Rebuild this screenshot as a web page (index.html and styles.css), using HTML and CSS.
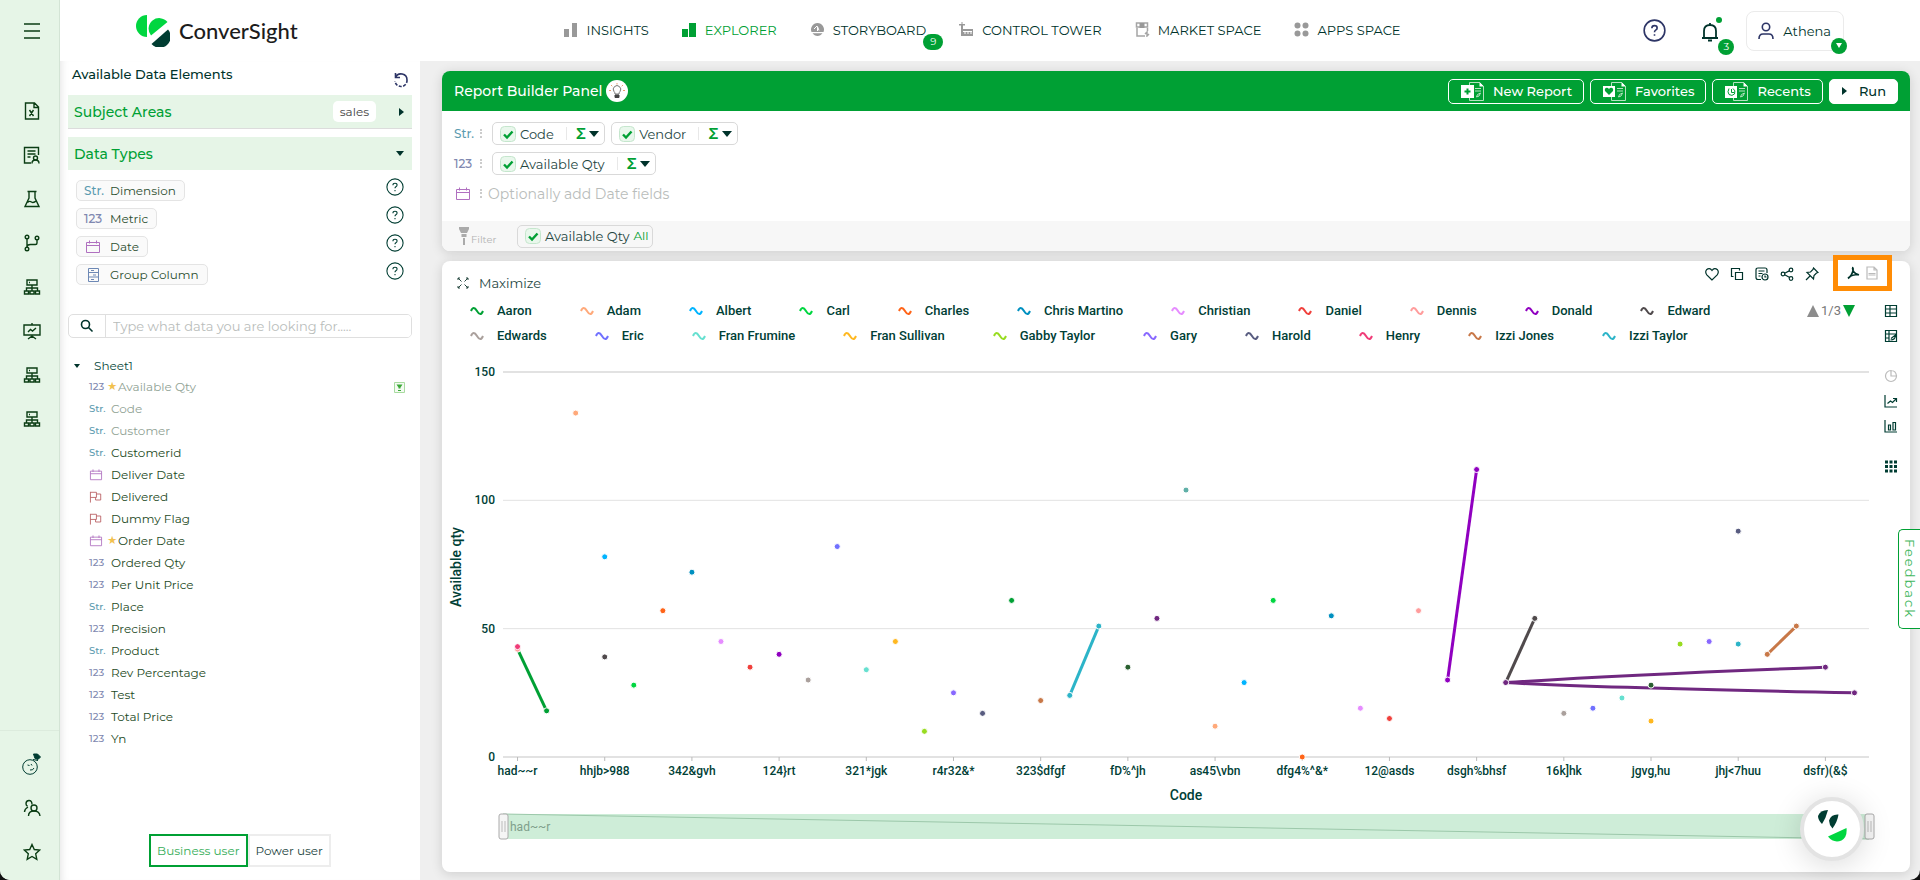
FILE: index.html
```html
<!DOCTYPE html>
<html lang="en">
<head>
    <meta charset="UTF-8">
    <title>ConverSight - Explorer</title>
    <link rel="stylesheet" href="styles.css">
</head>
<body>
    <!-- shared icons -->
    <svg class="sprite" aria-hidden="true">
        <symbol id="i-cal" viewBox="0 0 16 14"><path d="M1.500 2.500h13v10h-13zM1.500 5.500h13M4.500.5v3M11.500.5v3"/></symbol>
        <symbol id="i-flag" viewBox="0 0 16 14"><path d="M1.500 1v12.500M1.500 1.500h7v6h-7M8.500 3.500h5v7h-6v-3"/></symbol>
        <symbol id="i-help" viewBox="0 0 20 20"><circle cx="10" cy="10" r="9"/><path d="M7.700 8q0-2.200 2.300-2.200t2.300 2q0 1.200-1.300 1.900-1 .6-1 1.800M10 13.200v1.400"/></symbol>
        <symbol id="i-tree" viewBox="0 0 18 18"><path d="M4 2h10v5H4zM6 4.500h1M9 7v6M3.500 13v-3h11v3M1.500 13h4v3h-4zM7 13h4v3H7zM12.500 13h4v3h-4z"/></symbol>
        <symbol id="i-wave" viewBox="0 0 14 10"><path d="M1 5q2.500-6 6 0t6 0"/></symbol>
        <symbol id="i-check" viewBox="0 0 16 16"><rect x=".5" y=".5" width="15" height="15" rx="4" fill="#e9f7ec" stroke="#c5e6cd"/><path d="M4 8.500l3 3 5.500-6" fill="none" stroke="#00a034" stroke-width="2.400"/></symbol>
    </svg>

    <div class="app">
        <nav class="rail" aria-label="Tools">
            <button class="menu" title="Menu"><svg viewBox="0 0 18 18"><path d="M1 2h16M1 9h16M1 16h16"/></svg></button>
            <button title="Excel"><svg viewBox="0 0 18 18"><path d="M2.500 1h9l4 4v12h-13zM11 1v4.500h4.500M6.500 8l4 6M10.500 8l-4 6"/></svg></button>
            <button title="Report"><svg viewBox="0 0 18 18"><path d="M8 17H1.500V1.500h14V9M4.500 5h8M4.500 8h8M4.500 11h3"/><circle cx="12.500" cy="12" r="2"/><path d="M9 17.500q0-3.500 3.500-3.500t3.500 3.500"/></svg></button>
            <button title="Lab"><svg viewBox="0 0 18 18"><path d="M4.500 1.500h9M6 2v6l-4 8.500h14L12 8V2M4.500 12.500q2-2 4-.5t5-1.500"/></svg></button>
            <button title="Branches"><svg viewBox="0 0 18 18"><circle cx="4" cy="3" r="1.800"/><circle cx="4" cy="15" r="1.800"/><circle cx="14" cy="4" r="1.800"/><path d="M4 5v8M14 6v3q0 1.500-1.500 1.500h-5Q4 10.500 4 13"/></svg></button>
            <button title="Hierarchy"><svg><use href="#i-tree"/></svg></button>
            <button title="Presentation"><svg viewBox="0 0 18 18"><path d="M1 3h16v10H1zM9 1v2M9 13v3M5 17l4-3 4 3M5 10l2.500-2.500L9.500 9 13 6"/></svg></button>
            <button title="Network"><svg><use href="#i-tree"/></svg></button>
            <button title="Sources"><svg><use href="#i-tree"/></svg></button>
            <div class="rail-foot">
                <button title="Athena"><svg viewBox="0 0 20 22" class="face"><circle cx="8" cy="14" r="7.300"/><path d="M5.500 12l2 .5M9 11l1 1.500M8 17q3 .5 4-2"/><path d="M11.500 1h4l3 3-2.500 2.500-3-1z" fill="#003d32"/><path d="M11 6.500l5 1"/></svg></button>
                <button title="Users"><svg viewBox="0 0 18 18"><circle cx="11" cy="9" r="3"/><path d="M5.500 17q0-5 5.500-5t6 5M9 5.500Q9 1.500 6 1.500T3 4.700q0 1.500 1.500 2.600M1.500 13q0-3 3.500-5"/></svg></button>
                <button title="Starred"><svg viewBox="0 0 18 18"><path d="M9 1.500l2.300 5 5.400.6-4 3.700 1.100 5.500L9 13.500l-4.800 2.800 1.100-5.500-4-3.700 5.400-.6z"/></svg></button>
            </div>
        </nav>

        <div class="page">
            <header class="top">
                <a class="logo" href="#">
                    <svg viewBox="0 0 34 32"><path d="M11 0v22A11 11 0 0 1 11 0z" fill="#00d640"/><path d="M15 20.500A10.500 10.500 0 0 1 31.500 7z" fill="#00d640"/><path d="M15.500 29A10.500 10.500 0 0 0 32 14.500z" fill="#003d32"/></svg>
                    <span>ConverSight</span>
                </a>
                <nav class="tabs" aria-label="Main">
                    <a href="#"><svg viewBox="0 0 15 15"><path d="M1 7h5v8H1zM9 1h5v14H9z"/></svg>INSIGHTS</a>
                    <a href="#" class="on"><svg viewBox="0 0 15 15"><path d="M0 7h6v8H0zM7 1h7v14H7z"/></svg>EXPLORER</a>
                    <a href="#"><svg viewBox="0 0 15 15"><path d="M7.500 1a6.500 6.500 0 0 0-6 9h12a6.500 6.500 0 0 0-6-9zM2.500 11.200h10a6 6 0 0 1-10 0z"/><path d="M4 7l3-3M7.500 9V4.500L9 8.500" stroke="#fff" fill="none"/></svg>STORYBOARD<b class="badge">9</b></a>
                    <a href="#"><svg viewBox="0 0 15 15"><path d="M0 2h6v1.500H4V7h10v7H2V3.500H0zM2.500 0h1v2h-1z"/><path d="M4 9.500h9M6 9.500V12M9 9.500V12M12 9.500V12" stroke="#fff" fill="none"/></svg>CONTROL TOWER</a>
                    <a href="#"><svg viewBox="0 0 15 15"><path d="M1.500 1h11v4h-11z" stroke="#a5a5a5" stroke-width="1.500" fill="none"/><path d="M4.500 1h5v5h-5z"/><path d="M2 6v8h8M12.500 6v3M10 12l2-2v4l2-2" stroke="#a5a5a5" stroke-width="1.500" fill="none"/></svg>MARKET SPACE</a>
                    <a href="#"><svg viewBox="0 0 15 15"><circle cx="3.500" cy="3.500" r="3"/><circle cx="11.500" cy="3.500" r="3"/><circle cx="3.500" cy="11.500" r="3"/><circle cx="11.500" cy="11.500" r="3"/></svg>APPS SPACE</a>
                </nav>
                <div class="account">
                    <button class="help" title="Help"><svg><use href="#i-help"/></svg></button>
                    <button class="bell" title="Notifications"><svg viewBox="0 0 20 20"><path d="M2 16h16M4 16V9q0-6 6-6t6 6v7M10 1v2M8 18.500h4"/></svg><i class="dot"></i><b class="badge">3</b></button>
                    <button class="user"><svg viewBox="0 0 16 18"><circle cx="8" cy="5" r="3.700"/><path d="M1 17q0-5 4-5h6q4 0 4 5"/></svg>Athena<b class="badge"><i class="tri down"></i></b></button>
                </div>
            </header>

            <div class="content">
                <aside class="side">
                    <div class="side-head"><h2>Available Data Elements</h2>
                        <button title="Reset"><svg viewBox="0 0 16 16"><path d="M2.500 1v4.500H7M2.500 5.500A6 6 0 0 1 14 8"/><path d="M14 8A6 6 0 0 1 2 9" stroke-dasharray="3 1.500"/></svg></button></div>
                    <button class="band areas">Subject Areas<span class="tag">sales</span><i class="tri right"></i></button>
                    <button class="band">Data Types<i class="tri down"></i></button>
                    <ul class="types">
                        <li><button class="type"><span class="str">Str.</span>Dimension</button><button class="help" title="About dimensions"><svg><use href="#i-help"/></svg></button></li>
                        <li><button class="type"><span class="num">123</span>Metric</button><button class="help" title="About metrics"><svg><use href="#i-help"/></svg></button></li>
                        <li><button class="type"><svg class="cal"><use href="#i-cal"/></svg>Date</button><button class="help" title="About dates"><svg><use href="#i-help"/></svg></button></li>
                        <li><button class="type"><svg class="group" viewBox="0 0 16 14"><path d="M3.500.5h10v13h-10zM3.500 4.500h10M3.500 9h10M6 2.500h3M8 7h3M6 11.500h3"/></svg>Group Column</button><button class="help" title="About groups"><svg><use href="#i-help"/></svg></button></li>
                    </ul>
                    <label class="search">
                        <svg viewBox="0 0 14 14"><circle cx="5.500" cy="5.500" r="4"/><path d="M8.500 8.500l4 4"/></svg>
                        <input type="text" placeholder="Type what data you are looking for....." aria-label="Search data">
                    </label>
                    <button class="sheet"><i class="tri down"></i>Sheet1</button>
                    <ul class="fields">
                        <li class="used"><span class="num">123</span><i class="star">★</i>Available Qty<svg class="filtered" viewBox="0 0 11 11"><path d="M.5.5h10v10H.5z" fill="#f4fbf2" stroke="#a8dba0"/><path d="M2.500 2.500h6l-2 3v1h-2v-1zM4 8h3v1H4z" fill="#3aa836"/></svg></li>
                        <li class="used"><span class="str">Str.</span>Code</li>
                        <li class="used"><span class="str">Str.</span>Customer</li>
                        <li><span class="str">Str.</span>Customerid</li>
                        <li><svg class="cal"><use href="#i-cal"/></svg>Deliver Date</li>
                        <li><svg class="flag"><use href="#i-flag"/></svg>Delivered</li>
                        <li><svg class="flag"><use href="#i-flag"/></svg>Dummy Flag</li>
                        <li><svg class="cal"><use href="#i-cal"/></svg><i class="star">★</i>Order Date</li>
                        <li><span class="num">123</span>Ordered Qty</li>
                        <li><span class="num">123</span>Per Unit Price</li>
                        <li><span class="str">Str.</span>Place</li>
                        <li><span class="num">123</span>Precision</li>
                        <li><span class="str">Str.</span>Product</li>
                        <li><span class="num">123</span>Rev Percentage</li>
                        <li><span class="num">123</span>Test</li>
                        <li><span class="num">123</span>Total Price</li>
                        <li><span class="num">123</span>Yn</li>
                    </ul>
                    <div class="mode"><button class="on">Business user</button><button>Power user</button></div>
                </aside>

                <main class="work">
                    <section class="card builder">
                        <div class="bar">
                            <h1>Report Builder Panel</h1>
                            <button class="bulb" title="Tips"><svg viewBox="0 0 16 16"><path d="M8 0v1.500M2 2l1.300 1.300M14 2l-1.300 1.300M0 7.500h2M16 7.500h-2" stroke="#e8a070"/><path d="M6 11q0-1.500-1-2.500a3.700 3.700 0 1 1 6 0q-1 1-1 2.500z" stroke="#777"/><path d="M6 12h4v2.500H6z" fill="#444" stroke="#444"/></svg></button>
                            <div class="actions">
                                <button><svg viewBox="0 0 24 19"><path class="doc" d="M8.500 4V.5h10l4 4v14h-14V15M14 6.500h6M14 9h6M15.500 15q0-3 4-4-1 4-4 4"/><path d="M0 3h13v13H0zM18.500 0v4.500H23z" fill="#fff"/><path class="mark" d="M6.500 6.500v6M3.500 9.500h6"/></svg>New Report</button>
                                <button><svg viewBox="0 0 24 19"><path class="doc" d="M8.500 4V.5h10l4 4v14h-14V15M14 6.500h6M14 9h6M15.500 15q0-3 4-4-1 4-4 4"/><path d="M0 4h12v11H0zM18.500 0v4.500H23z" fill="#fff"/><path d="M6 13L2 9q-.8-3 1.800-3.200Q5.400 5.800 6 7.200 6.600 5.800 8.200 5.800 10.800 6 10 9z" fill="#00a034"/></svg>Favorites</button>
                                <button><svg viewBox="0 0 24 19"><path class="doc" d="M8.500 4V.5h10l4 4v14h-14V15M14 6.500h6M14 9h6M15.500 15q0-3 4-4-1 4-4 4"/><path d="M0 4h12v12H0zM18.500 0v4.500H23z" fill="#fff"/><path class="mark thin" d="M6.500 7v3.500H9M4 6.500Q2 10 4 12.500q3 2 5.500-.5Q11 8.500 8 6.500"/></svg>Recents</button>
                                <button class="run"><i class="tri right"></i>Run</button>
                            </div>
                        </div>
                        <div class="slots">
                            <div class="slot"><span class="str">Str.</span><i class="grip"></i>
                                <span class="pill"><svg><use href="#i-check"/></svg>Code<button title="Aggregate Code">Σ<i class="tri down"></i></button></span>
                                <span class="pill"><svg><use href="#i-check"/></svg>Vendor<button title="Aggregate Vendor">Σ<i class="tri down"></i></button></span>
                            </div>
                            <div class="slot"><span class="num">123</span><i class="grip"></i>
                                <span class="pill"><svg><use href="#i-check"/></svg>Available Qty<button title="Aggregate Available Qty">Σ<i class="tri down"></i></button></span>
                            </div>
                            <div class="slot"><svg class="cal"><use href="#i-cal"/></svg><i class="grip"></i>
                                <input type="text" placeholder="Optionally add Date fields" aria-label="Date fields">
                            </div>
                        </div>
                        <div class="filters">
                            <span class="filter-name"><svg viewBox="0 0 10 18"><path d="M0 0h10v2L8 6H2L0 2zM2.500 7h5v3h-5zM4 11h2v7H4z"/></svg>Filter</span>
                            <span class="pill"><svg><use href="#i-check"/></svg>Available Qty<em>All</em></span>
                        </div>
                    </section>

                    <section class="card result">
                        <div class="result-head">
                            <button class="max"><svg viewBox="0 0 12 12"><path d="M1 3V1h2M9 1h2v2M1 9v2h2M11 9v2H9M1 1l3.500 3.500M11 1L7.500 4.500M1 11l3.500-3.500M11 11L7.500 7.500"/></svg>Maximize</button>
                            <div class="tools">
                                <button title="Like"><svg viewBox="0 0 14 14"><path d="M7 13L1.800 7.800Q-.2 5 1.500 2.800 4.500.2 7 3.500 9.500.2 12.500 2.800 14.200 5 12.200 7.800z"/></svg></button>
                                <button title="Copy"><svg viewBox="0 0 14 14"><path d="M5.500 5.500h7v7h-7zM3.500 9.500h-2v-8h8v2"/></svg></button>
                                <button title="Schedule"><svg viewBox="0 0 14 14"><path d="M6 12.500H3q-2 0-2-2V3q0-2 2-2h7q2 0 2 2v3M3.500 4h6M3.500 6.500h4M3.500 9h2"/><circle cx="10" cy="10" r="3"/><path d="M10 8.500V10h1.500"/></svg></button>
                                <button title="Share"><svg viewBox="0 0 14 14"><circle cx="3" cy="7" r="1.800"/><circle cx="11" cy="3" r="1.800"/><circle cx="11" cy="11.500" r="1.800"/><path d="M4.700 6.200l4.500-2.300M4.700 7.800l4.500 2.500"/></svg></button>
                                <button title="Pin"><svg viewBox="0 0 14 14"><path d="M8.500 1l4.500 4.500-1.500.5L9 8.500 8.500 12 2 5.500 5.500 5 8 2.500zM5 9l-4 4"/></svg></button>
                            </div>
                            <div class="export">
                                <button title="Export PDF"><svg viewBox="0 0 14 14"><path d="M6 1.500q1.600 0 1 3-1 5-5 8M6.500 2q0 5 6.500 7M2 12q4-3.500 10.500-3.500" stroke-width="1.600"/></svg></button>
                                <button title="Export file" disabled><svg viewBox="0 0 14 14"><path d="M2 1h7l3 3v9H2zM9 1v3h3M3.500 7.500h7M3.500 9h7"/></svg></button>
                            </div>
                        </div>
                        <div class="result-body">
                            <div class="plot">
                                <div class="legend">
                                    <div class="legend-items">
                                        <div class="legend-row" id="legend1"></div>
                                        <div class="legend-row" id="legend2"></div>
                                    </div>
                                    <div class="pager"><button title="Previous" disabled></button><span>1/3</span><button title="Next"></button></div>
                                </div>
                                <svg class="chart" id="chart" viewBox="0 0 1434 500" role="img" aria-label="Available qty by Code"></svg>
                            </div>
                            <div class="views">
                                <button title="Table"><svg viewBox="0 0 14 14"><path d="M1.500 1.500h11v11h-11zM1.500 5h11M1.500 9h11M6 1.500v11"/></svg></button>
                                <button title="Pivot"><svg viewBox="0 0 14 14"><path d="M1.500 1.500h11v11h-11zM1.500 5h11M5 1.500v11M1.500 9h3.500M6.500 11q5 0 5-5L7 9.500"/></svg></button>
                                <button title="Pie" class="gap" disabled><svg viewBox="0 0 14 14"><path d="M7 1.500A5.500 5.500 0 1 0 12.500 7H7zM7 1.500Q12 1.500 12.500 7"/></svg></button>
                                <button title="Line"><svg viewBox="0 0 14 14"><path d="M1 1v12h12M3.500 9.500L6.500 7l2 1.500L12 5M9 4.500h3.500V8"/></svg></button>
                                <button title="Bar"><svg viewBox="0 0 14 14"><path d="M1 1v12h12M4.500 6h2v5h-2zM9 3.500h2.500V11H9z"/></svg></button>
                                <button title="More" class="gap"><svg viewBox="0 0 14 14"><path d="M1 3h12M1 7.500h12M1 12h12" stroke-width="3" stroke-dasharray="3 1.500"/></svg></button>
                            </div>
                        </div>
                    </section>
                </main>
            </div>
        </div>
    </div>

    <button class="feedback">Feedback</button>
    <button class="bot" title="Ask Athena"><svg viewBox="0 0 30 32"><path d="M11 0Q3 0 1 6q0 4 4 8 4-6 6-14z" fill="#003d32"/><path d="M21.500 4.500Q14 4 12 10.500q0 4 3.500 8 5-7 6-14z" fill="#003d32"/><path d="M11 26.500L29.500 18q1 9-5 12.500-8 3-13.500-4z" fill="#00d640"/></svg></button>

    <script src="chart.js"></script>
</body>
</html>
```
FILE: styles.css
```css
:root {
    --green: #00a034;
    --mint: #e6f5e7;
    --ink: #00332b;
    --text: #24463f;
    --line: #d9d9d9;
}
* { box-sizing: border-box; }
html { background: #111; }
body {
    margin: 0;
    color: var(--text);
    font: 13px/16px Montserrat, Inter, sans-serif;
}
button, input { font: inherit; color: inherit; }
button { background: none; border: none; padding: 0; cursor: pointer; }
a { color: inherit; text-decoration: none; }
ul { list-style: none; margin: 0; padding: 0; }
h1, h2 { margin: 0; font-weight: 500; }
i, em { font-style: normal; }
svg { display: block; flex: none; fill: none; stroke: currentColor; }
.sprite { position: absolute; width: 0; height: 0; }

.tri { border: 4px solid transparent; flex: none; }
.tri.right { border-left: 5px solid var(--ink); border-right: none; }
.tri.down { border-top: 5px solid var(--ink); border-bottom: none; }
.str, .num { flex: none; font-size: 12px; font-weight: 500; width: 18px; }
.str { color: #5c9bb0; }
.num { color: #8088b0; }
.cal { color: #b070c0; width: 16px; height: 14px; }
.flag { color: #b85c60; width: 16px; height: 14px; }
.badge {
    position: absolute;
    min-width: 16px; height: 16px;
    border-radius: 8px;
    background: var(--green); color: #fff;
    font-size: 10px; font-weight: 400; text-align: center; }

.app {
    display: flex;
    min-height: 100vh;
    background: #efefef;
    border-radius: 0 0 10px 10px;
    overflow: hidden; }

/* left rail */
.rail {
    flex: none;
    width: 60px;
    background: var(--mint);
    border-right: 1px solid #d3e4d5;
    color: #0b3d14;
    padding-top: 9px;
    display: flex;
    flex-direction: column; }
.rail button {
    width: 100%; height: 44px;
    padding-left: 4px;
    display: grid; place-items: center; }
.rail svg { width: 18px; height: 18px; stroke-width: 1.4; }
.rail .menu { margin-bottom: 36px; }
.rail-foot { margin-top: auto; padding: 11px 0 6px; border-top: 1px solid #dcebdd; }
.rail .face { width: 20px; height: 22px; stroke-width: 1; color: #003d32; }

/* header */
.page { flex: 1; min-width: 0; display: flex; flex-direction: column; }
.top {
    height: 61px;
    padding: 0 76px;
    background: #fff;
    display: flex;
    align-items: center; }
.logo, .account { flex: 1; display: flex; align-items: center; }
.logo { gap: 9px; color: #1c1c1c; font: 500 22px/30px Lato, sans-serif; }
.logo svg { width: 34px; height: 32px; stroke: none; }
.tabs { display: flex; gap: 33px; margin: 0 16px 2px 0; color: var(--ink); }
.tabs a { position: relative; display: flex; align-items: center; gap: 8px; white-space: nowrap; }
.tabs svg { width: 15px; height: 15px; fill: #999; stroke: none; }
.tabs .on { color: var(--green); }
.tabs .on svg { fill: var(--green); }
.tabs .badge { right: -17px; top: 12px; width: 20px; }
.account { justify-content: flex-end; color: var(--ink); }
.account button { position: relative; }
.account .help svg { width: 23px; height: 23px; color: #2d3566; stroke-width: 1.4; }
.bell { margin: 2px 26px 0 34px; }
.bell svg { width: 20px; height: 20px; stroke-width: 1.8; }
.bell .badge { left: 18px; top: 17px; }
.dot { position: absolute; right: -2px; top: -5px; width: 6px; height: 6px; border-radius: 50%; background: var(--green); }
.user {
    height: 40px;
    border: 1px solid #ebebeb;
    border-radius: 8px;
    padding: 0 12px 0 11px;
    display: flex; align-items: center; gap: 9px; }
.user svg { width: 16px; height: 18px; color: #2d3566; stroke-width: 1.6; }
.user .badge { right: -4px; bottom: -4px; display: grid; place-items: center; }
.user .tri.down { border-width: 3px; border-top: 5px solid #fff; border-bottom: none; }

/* data elements */
.content { flex: 1; display: flex; }
.side {
    flex: none;
    width: 360px;
    background: #fff;
    box-shadow: inset 8px 0 10px -8px #ddd;
    padding: 4px 8px 13px;
    display: flex;
    flex-direction: column; }
.side-head {
    height: 30px;
    padding: 0 3px 0 4px;
    display: flex; justify-content: space-between;
    color: var(--ink); }
.side-head h2 { font-size: 13px; line-height: 18px; }
.side-head svg { width: 16px; height: 16px; color: #2d3566; stroke-width: 1.6; }
.band {
    height: 33px;
    padding: 0 8px 0 6px;
    background: var(--mint);
    display: flex; align-items: center;
    color: var(--green); font-size: 14px; font-weight: 500; }
.band .tri { margin-left: auto; }
.areas { margin-bottom: 9px; box-shadow: 0 1px #dcdcdc; }
.areas .tri { margin-left: 23px; }
.tag {
    margin-left: auto;
    background: #fff; border-radius: 5px;
    padding: 2px 7px; line-height: 17px;
    color: #444; font-size: 12px; font-weight: 400; }
.types { padding: 8px 8px 0; }
.types li { height: 28px; display: flex; justify-content: space-between; align-items: flex-start; }
.type {
    height: 21px;
    margin-top: 2px; padding: 0 8px 0 7px;
    border: 1px solid #e4e4e4; border-radius: 5px;
    background: #fafafa; color: #2c4f30;
    display: flex; align-items: center; gap: 8px;
    font-size: 12px; }
.types .cal, .types .group { width: 18px; }
.group { color: #6d88b5; height: 14px; }
.types .help { color: #003d32; }
.types .help svg { width: 18px; height: 18px; stroke-width: 1.2; }
.search {
    margin: 24px 0 18px;
    height: 24px;
    border: 1px solid #dfdfdf; border-radius: 5px;
    overflow: hidden;
    display: flex; align-items: center; }
.search svg { width: 14px; height: 14px; margin: 0 11px; stroke-width: 1.6; color: var(--ink); }
.search input { flex: 1; border: none; border-left: 1px solid #dfdfdf; padding: 0 7px; outline: none; height: 22px; }
input::placeholder { color: #b9bdbb; opacity: 1; }
.sheet { display: flex; align-items: center; gap: 14px; padding-left: 6px; height: 20px; font-size: 12px; color: #0a4a3d; }
.sheet .tri { border-width: 3px; border-top-width: 4px; }
.fields { font-size: 12px; color: #1d4a24; }
.fields li { height: 22px; padding: 0 7px 0 21px; display: flex; align-items: center; }
.fields .str, .fields .num { font-size: 10px; width: 22px; }
.fields .cal, .fields .flag { width: 14px; height: 12px; margin-right: 8px; }
.fields .star { color: #f2c14e; font-size: 10px; width: 11px; margin-left: -4px; }
.fields .used { color: #90a294; }
.filtered { width: 11px; height: 11px; margin-left: auto; stroke: none; }
.mode { margin: auto 0 0; display: flex; justify-content: center; font-size: 12px; }
.mode button { height: 33px; padding: 0 6px; border: 2px solid #ededed; }
.mode .on { border-color: var(--green); color: #35ad58; }

/* workspace */
.work {
    flex: 1; min-width: 0;
    padding: 10px 10px 8px 22px;
    display: flex; flex-direction: column; gap: 10px; }
.card { background: #fff; border-radius: 8px; box-shadow: 0 2px 12px rgba(0,0,0,.14); }
.bar {
    height: 40px;
    padding: 0 12px;
    border-radius: 8px 8px 0 0;
    background: var(--green); color: #fff;
    display: flex; align-items: center; }
.bar h1 { font-size: 14px; }
.bulb { width: 22px; height: 22px; margin-left: 4px; border-radius: 50%; background: #fff; display: grid; place-items: center; }
.bulb svg { width: 16px; height: 16px; }
.actions { margin-left: auto; display: flex; gap: 6px; }
.actions button {
    height: 25px;
    padding: 0 11px 0 12px;
    border: 1px solid #fff; border-radius: 5px;
    display: flex; align-items: center; gap: 8px;
    font-weight: 500; }
.actions svg { width: 24px; height: 19px; stroke: none; }
.actions .doc { stroke: #b5e2c1; }
.actions .mark { stroke: var(--green); stroke-width: 2; }
.actions .thin { stroke-width: 1; }
.actions .run { background: #fff; color: var(--ink); gap: 12px; }
.slots { padding: 8px 12px 13px; display: grid; gap: 1px; }
.slot { height: 29px; display: flex; align-items: center; }
.slot > .cal { width: 18px; }
.grip { width: 2px; height: 9px; margin: 0 10px 0 8px; border-left: 2px dotted #ccc; }
.slot input { flex: 1; border: none; outline: none; padding: 0; margin-left: -4px; font-size: 14px; }
.pill {
    height: 23px;
    margin-right: 6px; padding: 0 5px 0 7px;
    border: 1px solid var(--line); border-radius: 5px;
    display: flex; align-items: center; }
.pill svg { width: 16px; height: 16px; margin-right: 4px; }
.pill button {
    margin-left: 12px; padding-left: 9px;
    border-left: 1px solid #e8e8e8;
    line-height: 13px;
    display: flex; align-items: center; gap: 3px;
    color: var(--green); font-size: 15px; font-weight: 600; }
.pill .tri { border-width: 5px; border-top-width: 6px; }
.pill em { margin-left: 4px; color: var(--green); font-size: 12px; }
.pill:has(em) { padding-right: 3px; }
.filters {
    height: 30px;
    padding-left: 17px;
    background: #f7f7f7;
    border-radius: 0 0 8px 8px;
    display: flex; align-items: center; }
.filter-name { display: flex; align-items: flex-end; gap: 2px; width: 58px; color: #b3b3b3; font-size: 10px; line-height: 10px; }
.filter-name svg { width: 10px; height: 18px; stroke: none; fill: #aaa; }

/* result */
.result { flex: 1; }
.result-head { height: 36px; padding: 0 18px 0 15px; display: flex; align-items: flex-start; }
.max { margin-top: 14px; display: flex; align-items: center; gap: 10px; }
.max svg { width: 12px; height: 12px; }
.tools { margin: 6px 14px 0 auto; display: flex; gap: 11px; color: var(--ink); }
.tools svg, .views svg, .export svg { width: 14px; height: 14px; stroke-width: 1.2; }
.export {
    margin-top: -6px;
    height: 36px; padding: 0 8px;
    border: 5px solid #ff8c05;
    background: #fff;
    display: flex; align-items: center; gap: 5px;
    color: var(--ink); }
button:disabled { color: #bbb; cursor: default; }
.result-body { display: flex; }
.plot { flex: 1; min-width: 0; }
.legend { padding: 1px 21px 3px 28px; display: flex; justify-content: space-between; font-family: Roboto, sans-serif; }
.legend-row { display: flex; gap: 48px; height: 25px; }
.legend-row button { display: flex; align-items: center; gap: 13px; color: #004036; font-weight: 500; white-space: nowrap; }
.legend-row svg { width: 14px; height: 10px; stroke-width: 2; }
.pager { display: flex; align-items: center; gap: 2px; height: 25px; color: #777; }
.pager button { border: 6px solid transparent; border-top: 12px solid var(--green); border-bottom: none; }
.pager button:disabled { border-top: none; border-bottom: 12px solid #8c8c8c; }
.chart { width: 100%; height: auto; }
.chart text { fill: #004036; stroke: none; font: 500 12px Roboto, sans-serif; text-anchor: middle; }
.chart .ylab { text-anchor: end; }
.chart .title { font-size: 14px; }
.chart .zoomlab { fill: #7f9f8b; text-anchor: start; font-weight: 400; }
.views { flex: none; width: 34px; padding: 7px 0 0 8px; display: flex; flex-direction: column; gap: 11px; color: #003d32; }
.views .gap { margin-top: 15px; }

/* floating */
.feedback {
    position: fixed; right: 0; top: 529px;
    height: 100px; width: 22px;
    border: 1px solid var(--green); border-right: none;
    border-radius: 5px 0 0 5px;
    background: #fff; color: #43b75e;
    writing-mode: vertical-rl;
    line-height: 20px; letter-spacing: 2px; }
.bot {
    position: fixed; right: 56px; bottom: 19px;
    width: 64px; height: 64px;
    border: 4px solid #e3e3e3; border-radius: 50%;
    padding-bottom: 6px;
    background: #fff;
    box-shadow: 0 4px 30px rgba(0,0,0,.15);
    display: grid; place-items: center; }
.bot svg { width: 30px; height: 32px; stroke: none; }
```
FILE: chart.js
```js
const C = {
    aaron: '#00a034', adam: '#ffa97a', albert: '#00b4ff', carl: '#00d640', charles: '#ff6418',
    chris: '#0090c0', christian: '#e68cff', daniel: '#f0403c', dennis: '#ff9c9c', donald: '#9000c0',
    edward: '#504a4c', edwards: '#aaa09c', eric: '#7070ff', frumine: '#66e0d0', sullivan: '#ffb820',
    gabby: '#98dc20', gary: '#8868ff', harold: '#585c80', henry: '#f03c78', jones: '#c87848',
    taylor: '#2cb4c8', olive: '#2a6030', plum: '#702880', sea: '#60b0a8'
};

const legend = {
    legend1: [['Aaron', C.aaron], ['Adam', C.adam], ['Albert', C.albert], ['Carl', C.carl], ['Charles', C.charles],
        ['Chris Martino', C.chris], ['Christian', C.christian], ['Daniel', C.daniel], ['Dennis', C.dennis],
        ['Donald', C.donald], ['Edward', C.edward]],
    legend2: [['Edwards', C.edwards], ['Eric', C.eric], ['Fran Frumine', C.frumine], ['Fran Sullivan', C.sullivan],
        ['Gabby Taylor', C.gabby], ['Gary', C.gary], ['Harold', C.harold], ['Henry', C.henry],
        ['Izzi Jones', C.jones], ['Izzi Taylor', C.taylor]]
};

// [category index, value, colour]
const points = [
    [0, 42, C.dennis], [0, 43, C.henry], [1, 18, C.aaron], [2, 134, C.adam], [3, 78, C.albert], [3, 39, C.edward],
    [4, 28, C.carl], [5, 57, C.charles], [6, 72, C.chris], [7, 45, C.christian], [8, 35, C.daniel],
    [9, 40, C.donald], [10, 30, C.edwards], [11, 82, C.eric], [12, 34, C.frumine], [13, 45, C.sullivan],
    [14, 10, C.gabby], [15, 25, C.gary], [16, 17, C.harold], [17, 61, C.aaron], [18, 22, C.jones],
    [19, 24, C.taylor], [20, 51, C.taylor], [21, 35, C.olive], [22, 54, C.plum], [23, 104, C.sea],
    [24, 12, C.adam], [25, 29, C.albert], [26, 61, C.carl], [27, 0, C.charles], [28, 55, C.chris],
    [29, 19, C.christian], [30, 15, C.daniel], [31, 57, C.dennis], [32, 30, C.donald], [33, 112, C.donald],
    [34, 29, C.plum], [35, 54, C.edward], [36, 17, C.edwards], [37, 19, C.eric], [38, 23, C.frumine],
    [39, 28, C.olive], [39, 14, C.sullivan], [40, 44, C.gabby], [41, 45, C.gary], [42, 44, C.taylor],
    [42, 88, C.harold], [43, 40, C.jones], [44, 51, C.jones], [45, 35, C.plum], [46, 25, C.plum]
];

const lines = [
    [0, 42, 1, 18, C.aaron], [19, 24, 20, 51, C.taylor], [32, 30, 33, 112, C.donald],
    [34, 29, 35, 54, C.edward], [43, 40, 44, 51, C.jones]
];

const labels = ['had~~r', 'hhjb>988', '342&gvh', '124}rt', '321*jgk', 'r4r32&*', '323$dfgf', 'fD%^jh',
    'as45\\vbn', 'dfg4%^&*', '12@asds', 'dsgh%bhsf', '16k]hk', 'jgvg,hu', 'jhj<7huu', 'dsfr)(&$'];

const left = 61, right = 1427, base = 406;
const step = (right - left) / 47;
const px = i => left + step * (i + 0.5);
const py = v => base - v * 385 / 150;
const esc = s => s.replace(/&/g, '&amp;').replace(/</g, '&lt;').replace(/>/g, '&gt;');

for (const id in legend) {
    document.getElementById(id).innerHTML = legend[id].map(([name, colour]) =>
        `<button><svg style="color:${colour}"><use href="#i-wave"/></svg>${name}</button>`).join('');
}

let out = '';
for (const v of [0, 50, 100, 150]) {
    out += `<path d="M${left} ${py(v)}H${right}" stroke="#e2e2e2" stroke-width="${v % 150 ? 1 : 2}"/>`;
    out += `<text class="ylab" x="53" y="${py(v) + 4}">${v}</text>`;
}
labels.forEach((t, n) => {
    const x = px(n * 3);
    out += `<path d="M${x} ${base}v4" stroke="#bbb"/><text x="${x}" y="${base + 18}">${esc(t)}</text>`;
});
for (const [a, va, b, vb, c] of lines) {
    out += `<path d="M${px(a)} ${py(va)}L${px(b)} ${py(vb)}" stroke="${c}" stroke-width="3"/>`;
}
// same code, two later values
out += `<path d="M${px(34)} ${py(29)}Q${px(38)} ${py(32)} ${px(45)} ${py(35)}" stroke="${C.plum}" stroke-width="3"/>`;
out += `<path d="M${px(34)} ${py(29)}Q${px(37)} ${py(27)} ${px(46)} ${py(25)}" stroke="${C.plum}" stroke-width="3"/>`;
for (const [i, v, c] of points) {
    out += `<circle cx="${px(i)}" cy="${py(v)}" r="3" fill="${c}" stroke="#fff"/>`;
}
out += `<text class="title" x="${(left + right) / 2}" y="449">Code</text>`;
out += `<text class="title" transform="translate(19 216) rotate(-90)">Available qty</text>`;

// range slider
out += `<path d="M${left} 463H${right}v25H${left}z" fill="#ceedd8" stroke="none"/>`;
out += `<path d="M${left} 463L${right} 488" stroke="#9cc8aa"/>`;
for (const x of [left, right]) {
    out += `<rect x="${x - 4}" y="463" width="9" height="25" rx="2" fill="#f5f5f5" stroke="#aaa"/>`;
    out += `<path d="M${x - 1} 470v11M${x + 2} 470v11" stroke="#bbb"/>`;
}
out += `<text class="zoomlab" x="68" y="480">had~~r</text>`;
document.getElementById('chart').innerHTML = out;
```
